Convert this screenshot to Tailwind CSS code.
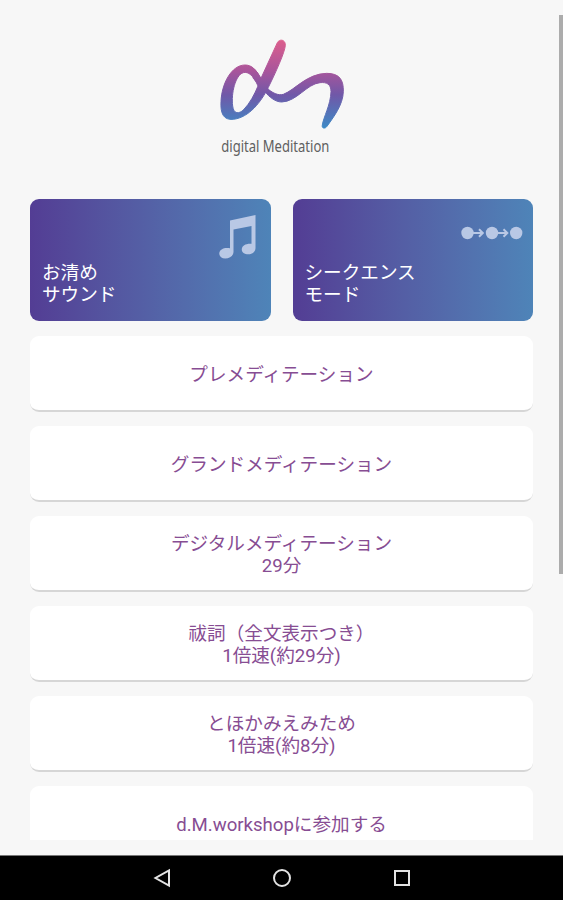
<!DOCTYPE html>
<html lang="ja">
<head>
  <meta charset="UTF-8">
  <meta name="viewport" content="width=device-width, initial-scale=1.0">
  <title>digital Meditation</title>
  <script src="https://cdn.jsdelivr.net/npm/@tailwindcss/browser@4"></script>
</head>
<body class="bg-[#f7f7f7] font-[Roboto,'Noto_Sans_CJK_JP',sans-serif] text-[18.6px] leading-[22px]">
  <div class="relative flex flex-col h-[900px] overflow-hidden">
    <main class="h-[840px] overflow-hidden px-[30px] pt-[30px]">
      <header class="flex justify-center h-[169px]">
        <svg class="w-[160px] h-[135px] mr-[3px]" viewBox="0 0 480 405">
          <defs>
            <linearGradient id="logo" gradientUnits="userSpaceOnUse" x1="0" y1="28" x2="0" y2="296">
              <stop offset="0" stop-color="#dd5e8c"/>
              <stop offset="0.35" stop-color="#a9559b"/>
              <stop offset="0.62" stop-color="#7058a8"/>
              <stop offset="1" stop-color="#3c8bc6"/>
            </linearGradient>
          </defs>
          <!-- d -->
          <path fill="url(#logo)" stroke="url(#logo)" stroke-width="3" fill-rule="evenodd" d="M232 38C238 26 257 28 256 46C255 66 225 132 205 172C183 216 148 262 100 268C70 271 61 250 63 215C65 160 95 105 135 105C154 105 168 116 182 147ZM174 168C160 136 145 124 130 128C106 135 93 190 98 228C101 254 118 251 130 240C150 220 164 192 174 168Z"/>
          <!-- m -->
          <path fill="url(#logo)" stroke="url(#logo)" stroke-width="3" d="M154 111C167 118 176 132 184 147L205 178C220 190 235 197 250 193C285 180 320 131 380 130C419 130 431 150 430 185C429 225 400 262 381 289C376 297 364 296 367 285C370 262 392 225 393 185C393 162 380 156 360 158C320 162 290 215 245 216C225 216 208 200 195 186L160 145Z"/>
          <text transform="translate(64 367) scale(1 1.1)" textLength="324" lengthAdjust="spacingAndGlyphs" font-family="Noto Sans" font-size="43" fill="#606060">digital Meditation</text>
        </svg>
      </header>

      <div class="grid grid-cols-2 gap-[22px] text-white">
        <a href="#" class="relative flex items-end h-[122px] rounded-[9px] px-3 pb-[15px] bg-linear-to-r from-[#533d94] to-[#4e84b8]">
          <span>お清め<br>サウンド</span>
          <svg class="absolute top-4 right-[14px] w-[39px] h-[44px]" viewBox="0 0 39 44" fill="#b9c8e5">
            <path d="M12 5.500L37.500 0V33C37.500 36.500 34.500 39.300 30.500 39.300C26 39.300 23.500 37 23.800 34C24.200 30.500 28 28.300 33.500 28.800V11L15.500 14.500V37C15.200 41 11.500 43.500 7.300 43.500C3.300 43.500 1 41 1.300 38C1.800 34.500 6 32.300 12 33.300Z"/>
          </svg>
        </a>
        <a href="#" class="relative flex items-end h-[122px] rounded-[9px] px-3 pb-[15px] bg-linear-to-r from-[#533d94] to-[#4e84b8]">
          <span>シークエンス<br>モード</span>
          <svg class="absolute top-[27px] right-[10px] w-[62px] h-[14px]" viewBox="0 0 62 14" fill="#b9c8e5" stroke="#b9c8e5">
            <g stroke="none">
              <circle cx="6.500" cy="7" r="6.200"/>
              <circle cx="31" cy="7" r="6.200"/>
              <circle cx="55.200" cy="7" r="6.200"/>
            </g>
            <path fill="none" stroke-width="2" d="M12 7H21.500M18 3.300L21.800 7L18 10.700M36 7H46M42.500 3.300L46.300 7L42.500 10.700"/>
          </svg>
        </a>
      </div>

      <div class="flex flex-col gap-[14px] mt-[15px] text-center text-[#874d93]">
        <a href="#" class="flex items-center justify-center h-[76px] pt-1 shrink-0 rounded-[9px] bg-white border-b-2 border-[#d6d6d6]">プレメディテーション</a>
        <a href="#" class="flex items-center justify-center h-[76px] pt-1 shrink-0 rounded-[9px] bg-white border-b-2 border-[#d6d6d6]">グランドメディテーション</a>
        <a href="#" class="flex items-center justify-center h-[76px] pt-1 shrink-0 rounded-[9px] bg-white border-b-2 border-[#d6d6d6]">デジタルメディテーション<br>29分</a>
        <a href="#" class="flex items-center justify-center h-[76px] pt-1 shrink-0 rounded-[9px] bg-white border-b-2 border-[#d6d6d6]">祓詞（全文表示つき）<br>1倍速(約29分)</a>
        <a href="#" class="flex items-center justify-center h-[76px] pt-1 shrink-0 rounded-[9px] bg-white border-b-2 border-[#d6d6d6]">とほかみえみため<br>1倍速(約8分)</a>
        <a href="#" class="flex items-center justify-center h-[76px] pt-1 shrink-0 rounded-[9px] bg-white border-b-2 border-[#d6d6d6]">d.M.workshopに参加する</a>
      </div>
    </main>

    <!-- scrollbar -->
    <div class="absolute top-[15px] right-0 w-1 h-[559px] bg-[#acacac]"></div>

    <!-- navigation bar -->
    <nav class="flex items-center justify-center gap-[96px] h-[45px] mt-auto bg-black border-t border-[#777]">
      <svg class="size-6" viewBox="0 0 24 24" fill="none" stroke="#e3e3e3" stroke-width="2"><path d="M19 4.500V19.500L5.500 12Z"/></svg>
      <svg class="size-6" viewBox="0 0 24 24" fill="none" stroke="#e3e3e3" stroke-width="2"><circle cx="12" cy="12" r="8"/></svg>
      <svg class="size-6" viewBox="0 0 24 24" fill="none" stroke="#e3e3e3" stroke-width="2"><path d="M5 5H19V19H5Z"/></svg>
    </nav>
  </div>
</body>
</html>
